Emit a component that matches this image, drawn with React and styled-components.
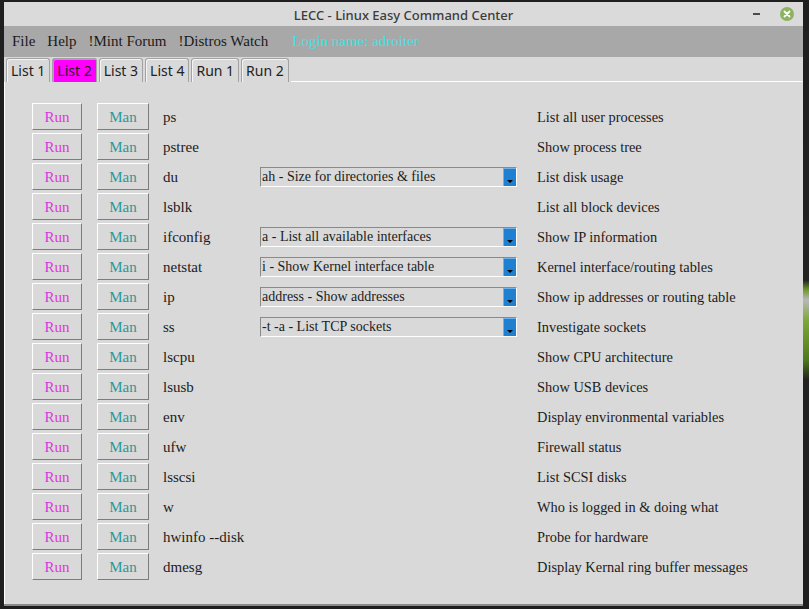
import React from "react";
import styled, { createGlobalStyle } from "styled-components";

const Global = createGlobalStyle`
  html, body { margin: 0; padding: 0; }
  body {
    width: 809px; height: 609px; overflow: hidden;
    background: linear-gradient(to bottom, #1e1e1e 0px, #222 280px, #6e9a2a 290px, #b8b8b8 300px, #7fa83a 320px, #4f7a1a 360px, #222 380px, #1e1e1e 609px);
  }
`;

const Desktop = styled.div`
  width: 809px;
  height: 609px;
  padding: 2px 0 0 4px;
  box-sizing: border-box;
  background: linear-gradient(to right, #1f1f1f 0 4px, transparent 4px);
`;

const Window = styled.div`
  width: 799px;
  height: 604px;
  display: flex;
  flex-direction: column;
  background: #d9d9d9;
  border-bottom: 2px solid #8a8a8a;
  box-sizing: border-box;
`;

const TitleBar = styled.div`
  height: 24px;
  flex: none;
  display: flex;
  align-items: center;
  justify-content: center;
  position: relative;
  background: #dadada;
  font-family: "Noto Sans", "Open Sans", sans-serif;
  font-size: 13px;
  font-weight: 500;
  color: #3c3c3c;
  padding-top: 1px;
  box-sizing: border-box;
`;

const WinControls = styled.div`
  position: absolute;
  right: 9px;
  top: 5px;
  display: flex;
  align-items: center;
  gap: 20px;
`;

const MinBtn = styled.div`
  width: 7px;
  height: 2px;
  background: #4a4a4a;
`;

const CloseBtn = styled.div`
  width: 14px;
  height: 14px;
  border-radius: 50%;
  background: #8db360;
  display: flex;
  align-items: center;
  justify-content: center;
`;

const MenuBar = styled.div`
  height: 31px;
  flex: none;
  display: flex;
  align-items: center;
  background: #a8a8a8;
  padding-left: 8px;
  font-family: "Liberation Serif", serif;
  font-size: 15px;
  color: #1a1a1a;
`;

const MenuItem = styled.span`
  margin-right: ${(p) => p.$gap || 12}px;
  color: ${(p) => p.$color || "#1a1a1a"};
`;

const TabBar = styled.div`
  height: 25px;
  flex: none;
  display: flex;
  align-items: flex-end;
  padding-left: 2px;
  gap: 2px;
  background: #d9d9d9;
  box-sizing: border-box;
`;

const Tab = styled.div`
  height: 24px;
  box-sizing: border-box;
  padding: 0 4px;
  display: flex;
  align-items: center;
  font-family: "Noto Sans", sans-serif;
  font-size: 14px;
  color: #222;
  background: ${(p) => (p.$active ? "#ff00ff" : "#d9d9d9")};
  border: 1px solid #a2a2a2;
  border-bottom: none;
  border-radius: 3px 3px 0 0;
  box-shadow: inset 1px 1px 0 ${(p) => (p.$active ? "#ff66ff" : "#f4f4f4")};
`;

const TabFill = styled.div`
  flex: 1;
  align-self: stretch;
  border-bottom: 1px solid #ffffff;
`;

const Panel = styled.div`
  flex: 1;
  border-left: 1px solid #ffffff;
  padding: 21px 0 0 27px;
  display: flex;
  flex-direction: column;
  gap: 3px;
`;

const Row = styled.div`
  height: 27px;
  display: grid;
  grid-template-columns: 65px 66px 97px 277px 1fr;
  align-items: center;
  font-family: "Liberation Serif", serif;
  font-size: 15px;
  color: #1c1c1c;
`;

const Btn = styled.div`
  width: ${(p) => p.$w}px;
  height: 27px;
  box-sizing: border-box;
  display: flex;
  align-items: center;
  justify-content: center;
  background: #d9d9d9;
  border-top: 1px solid #ffffff;
  border-left: 1px solid #ffffff;
  border-right: 1px solid #7c7c7c;
  border-bottom: 1px solid #7c7c7c;
  color: ${(p) => p.$color};
  font-size: 15px;
  padding-top: 1px;
`;

const Cmd = styled.span`
  padding-top: 1px;
`;

const Desc = styled.span`
  padding-top: 1px;
  font-size: 14.4px;
`;

const Select = styled.div`
  width: 257px;
  height: 20px;
  box-sizing: border-box;
  display: flex;
  align-items: center;
  justify-content: space-between;
  border-top: 1px solid #8a8a8a;
  border-left: 1px solid #8a8a8a;
  border-bottom: 1px solid #ffffff;
  border-right: 1px solid #ffffff;
  padding-left: 1px;
  font-size: 14px;
  color: #1c1c1c;
`;

const Arrow = styled.div`
  width: 13px;
  height: 18px;
  background: #1f80d2;
  border-left: 1px solid #6fb0ea;
  border-top: 1px solid #6fb0ea;
  box-sizing: border-box;
  display: flex;
  align-items: flex-end;
  justify-content: center;
  padding-bottom: 3px;
`;

const Tri = styled.div`
  width: 0;
  height: 0;
  border-left: 3px solid transparent;
  border-right: 3px solid transparent;
  border-top: 3px solid #000;
`;

const rows = [
  ["ps", null, "List all user processes"],
  ["pstree", null, "Show process tree"],
  ["du", "ah - Size for directories & files", "List disk usage"],
  ["lsblk", null, "List all block devices"],
  ["ifconfig", "a - List all available interfaces", "Show IP information"],
  ["netstat", "i - Show Kernel interface table", "Kernel interface/routing tables"],
  ["ip", "address - Show addresses", "Show ip addresses or routing table"],
  ["ss", "-t -a - List TCP sockets", "Investigate sockets"],
  ["lscpu", null, "Show CPU architecture"],
  ["lsusb", null, "Show USB devices"],
  ["env", null, "Display environmental variables"],
  ["ufw", null, "Firewall status"],
  ["lsscsi", null, "List SCSI disks"],
  ["w", null, "Who is logged in & doing what"],
  ["hwinfo --disk", null, "Probe for hardware"],
  ["dmesg", null, "Display Kernal ring buffer messages"],
];

const tabs = ["List 1", "List 2", "List 3", "List 4", "Run 1", "Run 2"];

export default function App() {
  return (
    <>
      <Global />
      <Desktop>
        <Window>
          <TitleBar>
            LECC - Linux Easy Command Center
            <WinControls>
              <MinBtn />
              <CloseBtn>
                <svg width="8" height="8" viewBox="0 0 8 8">
                  <path d="M1.5 1.5 L6.5 6.5 M6.5 1.5 L1.5 6.5" stroke="#fff" strokeWidth="1.8" strokeLinecap="round" />
                </svg>
              </CloseBtn>
            </WinControls>
          </TitleBar>
          <MenuBar>
            <MenuItem>File</MenuItem>
            <MenuItem>Help</MenuItem>
            <MenuItem>!Mint Forum</MenuItem>
            <MenuItem $gap={24}>!Distros Watch</MenuItem>
            <MenuItem $color="#3fe3e3">Login name: adroiter</MenuItem>
          </MenuBar>
          <TabBar>
            {tabs.map((t) => (
              <Tab key={t} $active={t === "List 2"}>{t}</Tab>
            ))}
            <TabFill />
          </TabBar>
          <Panel>
            {rows.map(([cmd, opt, desc]) => (
              <Row key={cmd}>
                <Btn $w={50} $color="#e035e0">Run</Btn>
                <Btn $w={52} $color="#2a9898">Man</Btn>
                <Cmd>{cmd}</Cmd>
                {opt ? (
                  <Select>
                    <span>{opt}</span>
                    <Arrow><Tri /></Arrow>
                  </Select>
                ) : (
                  <span />
                )}
                <Desc>{desc}</Desc>
              </Row>
            ))}
          </Panel>
        </Window>
      </Desktop>
    </>
  );
}
